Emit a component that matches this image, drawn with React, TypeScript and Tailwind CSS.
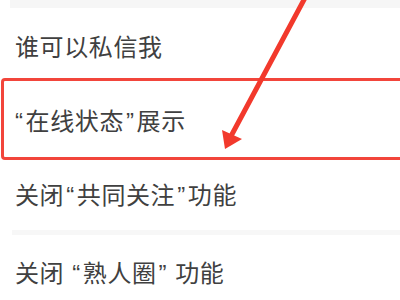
import React from 'react';

const Q = ({ c }: { c: string }) => (
  <span className="mx-[2px]" style={{ fontFamily: '"Liberation Sans", sans-serif' }}>
    {c}
  </span>
);

const Arrow = () => (
  <svg className="absolute left-0 top-0 pointer-events-none" width="400" height="300" viewBox="0 0 400 300">
    <line x1="306" y1="-4" x2="230" y2="138" stroke="#f2392c" strokeWidth="5" strokeLinecap="round" />
    <polygon points="225,149 222,130 242,139" fill="#f2392c" />
  </svg>
);

export default function App() {
  return (
    <div
      className="relative w-[400px] h-[300px] overflow-hidden bg-white text-[#404040] text-[24px] tracking-[0.6px]"
      style={{ fontFamily: '"Noto Sans CJK SC", sans-serif' }}
    >
      <div className="ml-[10px] h-[8px] bg-[#f6f6f6]" />
      <div className="h-[70px] flex items-center pl-[15px] pt-[6px]">谁可以私信我</div>
      <div className="ml-[1px] mr-[-10px] h-[82px] border-[3px] border-[#f2453b] rounded-[4px] flex items-center pl-[9px] pt-[4px]">
        <span>
          <Q c="“" />在线状态<Q c="”" />展示
        </span>
      </div>
      <div className="h-[70px] flex items-center pl-[15px]">
        <span>
          关闭<Q c="“" />共同关注<Q c="”" />功能
        </span>
      </div>
      <div className="ml-[12px] h-[5px] bg-[#f7f7f7]" />
      <div className="h-[75px] flex items-center pl-[15px]">
        <span>
          关闭 <Q c="“" />熟人圈<Q c="”" /> 功能
        </span>
      </div>
      <Arrow />
    </div>
  );
}
